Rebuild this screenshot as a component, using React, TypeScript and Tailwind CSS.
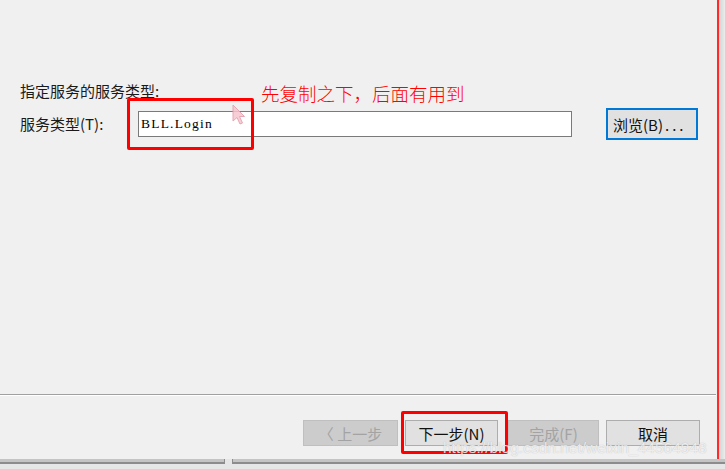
import React from "react";

const cjk = "font-['Noto_Sans_CJK_SC','Noto_Sans',sans-serif]";

const WizardButton = ({
  label,
  width,
  disabled,
}: {
  label: string;
  width: string;
  disabled?: boolean;
}) => (
  <button
    disabled={disabled}
    className={`${width} h-[26px] flex items-center justify-center text-[15px] leading-none border ${
      disabled
        ? "bg-[#cccccc] border-[#bfbfbf] text-[#a3a3a3]"
        : "bg-[#e1e1e1] border-[#adadad] text-[#111]"
    }`}
  >
    {label}
  </button>
);

export default function App() {
  return (
    <div className={`relative w-[725px] h-[469px] overflow-hidden bg-[#f0f0f0] flex flex-col ${cjk}`}>
      <div className="flex h-[459px]">
        {/* wizard page */}
        <div className="w-[717px] flex flex-col pt-[81px]">
          <div className="pl-[20px] text-[15px] leading-[20px] text-[#1a1a1a]">指定服务的服务类型:</div>

          <div className="mt-[7px] h-[32px] flex items-center">
            <div className="w-[138px] pl-[20px] text-[15px] leading-[20px] text-[#1a1a1a]">服务类型(T):</div>
            <div className="w-[434px] h-[26px] bg-white border border-[#7a7a7a] flex items-center pl-[2px] font-['Liberation_Serif',serif] text-[13.5px] tracking-[1.2px] text-black">
              BLL.Login
            </div>
            <button className="ml-[34px] w-[92px] h-[32px] bg-[#e1e1e1] border-2 border-[#0078d7] flex items-center pl-[5px] text-[15px] leading-none text-[#111]">
              浏览(B)<span className="tracking-[3px] ml-[2px]">...</span>
            </button>
          </div>

          <div className="flex-1" />

          <div className="w-[716px] border-t border-[#a0a0a0] h-[2px] bg-white" />

          <div className="mt-[24px] mb-[13px] flex justify-end pr-[17px]">
            <WizardButton label="〈 上一步" width="w-[95px]" disabled />
            <div className="w-[7px]" />
            <WizardButton label="下一步(N)" width="w-[93px]" />
            <div className="w-[10px]" />
            <WizardButton label="完成(F)" width="w-[91px]" disabled />
            <div className="w-[7px]" />
            <WizardButton label="取消" width="w-[94px]" />
          </div>
        </div>
        <div className="w-[2px] bg-[#ff2a2a]" />
        <div className="flex-1 bg-gradient-to-r from-[#d2d2d2] to-[#ececec]" />
      </div>

      {/* bottom strip */}
      <div className="flex h-[10px] bg-[#e6e6e6]">
        <div className="w-[225px] h-[5px] bg-[#c4c4c4] border-b-2 border-r border-[#8c8c8c]" />
        <div className="w-[7px]" />
        <div className="flex-1 h-[5px] bg-[#c4c4c4] border-b-2 border-l border-[#8c8c8c]" />
      </div>

      {/* annotations */}
      <div className="absolute left-[127px] top-[98px] w-[127px] h-[52px] border-[3px] border-[#ff0000] rounded-[2px]" />
      <div className="absolute left-[401px] top-[411px] w-[107px] h-[43px] border-[3px] border-[#ff0000] rounded-[2px]" />
      <div className="absolute left-[261px] top-[81px] text-[18.5px] leading-[24px] text-[#ff0000] font-light">
        先复制之下，后面有用到
      </div>

      <svg className="absolute left-[232px] top-[104px]" width="16" height="22" viewBox="0 0 16 22">
        <path
          d="M1 1 L1 17 L5 13.5 L8 20 L10.5 19 L7.5 12.5 L12.5 12.5 Z"
          fill="#f6c6cf"
          stroke="#e29aa8"
          strokeWidth="1"
          opacity="0.85"
        />
      </svg>

      <div className="absolute left-[443px] top-[438px] font-['Liberation_Sans',Arial,sans-serif] text-[15.5px] leading-[20px] text-white/75 [text-shadow:0_0_1px_rgba(130,130,130,0.55)]">
        https://blog.csdn.net/weixin_44564948
      </div>
    </div>
  );
}
